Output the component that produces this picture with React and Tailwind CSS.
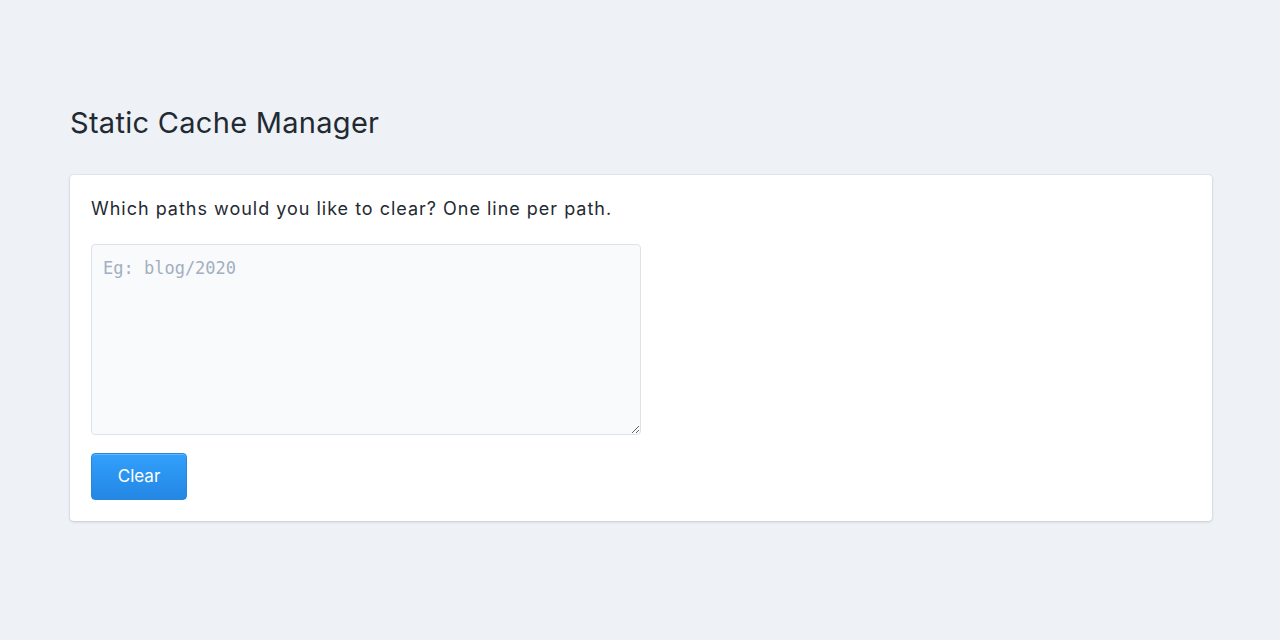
import React from 'react';

export default function App() {
  return (
    <div className="min-h-screen bg-[#eef1f5] font-['Inter',sans-serif] text-[#1f2a33]">
      <div className="pl-[70px] pr-[68px] pt-[104px]">
        <h1 className="text-[29px] leading-[38px] font-normal tracking-[0.01em] mb-[33px]">Static Cache Manager</h1>

        {/* Card */}
        <div className="bg-white rounded-[4px] shadow-[0_0_0_1px_rgba(49,55,70,0.04),0_1px_3px_0_rgba(49,55,70,0.18)] pt-[22px] px-[21px] pb-[21px]">
          <p className="text-[18px] leading-[24px] tracking-[0.055em] mb-[23px]">Which paths would you like to clear? One line per path.</p>
          <textarea
            className="block w-[550px] h-[191px] bg-[#f9fafc] border border-[#dde2ea] rounded-[4px] px-[11px] pt-[10px] pb-[10px] font-['DejaVu_Sans_Mono',monospace] text-[17px] leading-[26px] placeholder:text-[#a2afc0] outline-none resize"
            placeholder="Eg: blog/2020"
          />
          <button className="block mt-[18px] w-[96px] h-[47px] rounded-[4px] bg-gradient-to-b from-[#31a0fc] to-[#2487e4] border border-[#2a86d8] text-white text-[17px] shadow-[0_1px_0_rgba(255,255,255,0.25)_inset]">
            Clear
          </button>
        </div>
      </div>
    </div>
  );
}
